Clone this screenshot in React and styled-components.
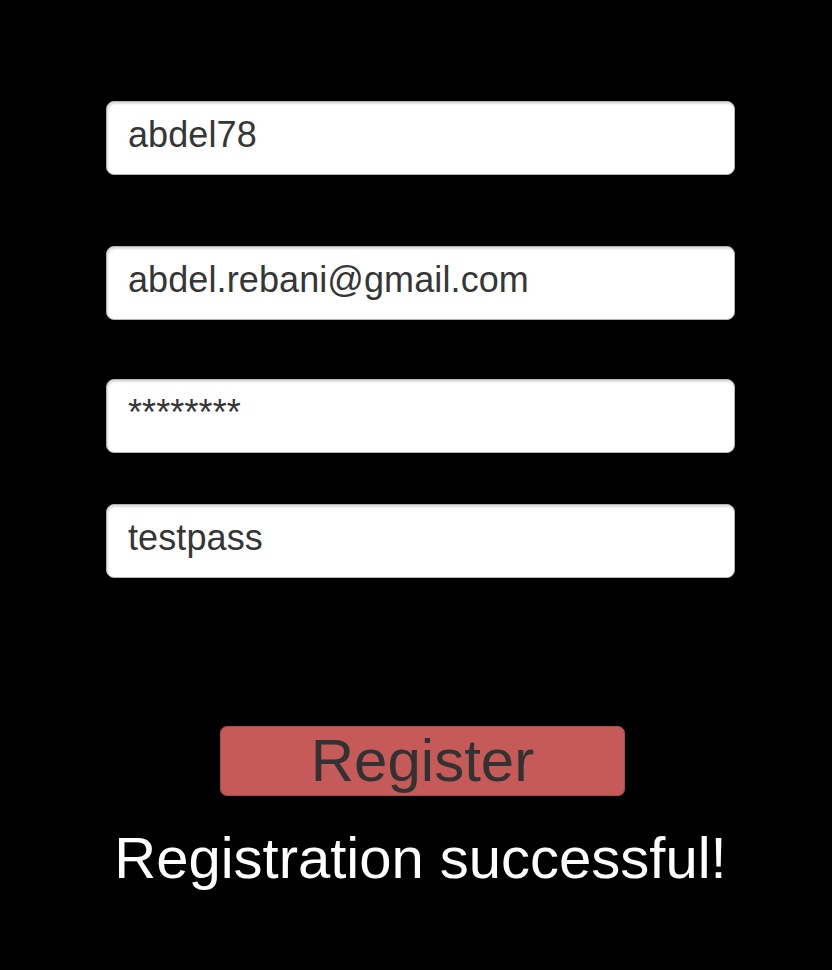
import styled, { createGlobalStyle } from 'styled-components';

const GlobalStyle = createGlobalStyle`
  html, body {
    margin: 0;
    padding: 0;
    background: #000;
  }
  body {
    font-family: "Liberation Sans", Arial, sans-serif;
  }
`;

const Page = styled.div`
  width: 832px;
  height: 970px;
  background: #000;
  box-sizing: border-box;
  padding: 101px 0 0 106px;
  display: flex;
  flex-direction: column;
  align-items: flex-start;
`;

const Form = styled.div`
  width: 629px;
  display: flex;
  flex-direction: column;
`;

const Field = styled.div`
  box-sizing: border-box;
  height: 74px;
  margin-top: ${({ $gap }) => $gap || 0}px;
  padding: 13px 21px 0;
  background: #fff;
  border: 1px solid #b4b4b4;
  border-radius: 8px;
  box-shadow: inset 1px 2px 2px rgba(0, 0, 0, 0.14);
  color: #363636;
  font-size: 36px;
  line-height: 40px;
  letter-spacing: 0.1px;
  white-space: nowrap;
  overflow: hidden;
`;

const Button = styled.button`
  box-sizing: border-box;
  margin: 148px 0 0 114px;
  width: 405px;
  height: 70px;
  padding: 0;
  background: #c55a58;
  border: 1px solid #a84b49;
  border-radius: 7px;
  color: #323232;
  font-family: "Liberation Sans", Arial, sans-serif;
  font-size: 60px;
  line-height: 66px;
  cursor: pointer;
`;

const Status = styled.div`
  margin-top: 29px;
  color: #fff;
  font-size: 58px;
  line-height: 66px;
  text-align: center;
`;

const fields = [
  { value: 'abdel78', gap: 0 },
  { value: 'abdel.rebani@gmail.com', gap: 71 },
  { value: '********', gap: 59 },
  { value: 'testpass', gap: 51 },
];

const App = () => {
  return (
    <>
      <GlobalStyle />
      <Page>
        <Form>
          {fields.map((f) => (
            <Field key={f.gap} $gap={f.gap}>
              {f.value}
            </Field>
          ))}
          <Button>Register</Button>
          <Status>Registration successful!</Status>
        </Form>
      </Page>
    </>
  );
};

export default App;
